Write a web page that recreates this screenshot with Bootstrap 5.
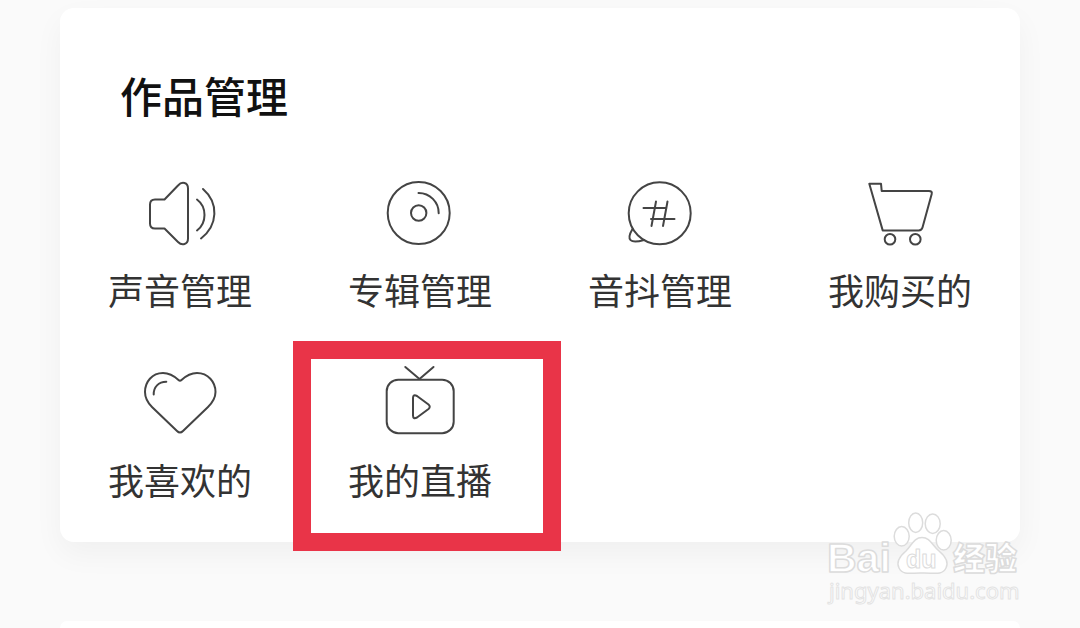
<!DOCTYPE html>
<html lang="zh-CN">
<head>
<meta charset="utf-8">
<meta name="viewport" content="width=device-width, initial-scale=1">
<title>作品管理</title>
<link href="https://cdn.jsdelivr.net/npm/bootstrap@5.3.0/dist/css/bootstrap.min.css" rel="stylesheet">
<style>
  body { background: #fafafa; font-family: "Noto Sans CJK SC", sans-serif; color: #333; }
  .page { padding: 8px 60px 0; gap: 79px; }
  .panel { background: #fff; border-radius: 14px; box-shadow: 0 12px 30px rgba(0, 0, 0, .045); }
  .works { padding: 57px 0 38px; }
  .next-panel { border-radius: 14px 14px 0 0; box-shadow: none; }
  .works-title { font-size: 42px; line-height: 60px; font-weight: 500; color: #111; margin: 0 60px 52px; }
  .tiles { row-gap: 53px; }
  .tile { gap: 15px; color: #333; font-size: 36px; line-height: 50px; font-weight: 400; }
  .tile svg { width: 72px; height: 72px; overflow: visible; fill: none; stroke: #444; stroke-width: 2; stroke-linecap: round; stroke-linejoin: round; }
  .marker { inset: -26px -21px -47px -7px; border: 18px solid #e93448; pointer-events: none; }
  .watermark { right: 52px; bottom: 16px; width: 208px; height: 100px; pointer-events: none; }
</style>
</head>
<body>
<main class="page container-fluid d-flex flex-column min-vh-100 position-relative overflow-hidden">
  <section class="panel works" aria-labelledby="works-title">
    <h1 class="works-title" id="works-title">作品管理</h1>
    <div class="tiles row row-cols-4 gx-0">
      <div class="col">
        <a href="#" class="tile d-flex flex-column align-items-center text-decoration-none text-nowrap">
          <svg viewBox="0 0 72 72" aria-hidden="true"><path d="M11 22.500H20.500L34 8.500C38 4 44 5.500 44 11.500V61.500C44 67.500 38 69 34 65L20.500 51.500H11Q6 51.500 6 46.500V27.500Q6 22.500 11 22.500ZM53 22.500C63 30 63 46 53 53.500M59 12C75 26 74 48 57 61.500"/></svg>
          <span>声音管理</span>
        </a>
      </div>
      <div class="col">
        <a href="#" class="tile d-flex flex-column align-items-center text-decoration-none text-nowrap">
          <svg viewBox="0 0 72 72" aria-hidden="true"><circle cx="34.700" cy="36" r="31"/><circle cx="34.700" cy="36" r="7.700"/><path d="M34.500 16A20 20 0 0 1 54.700 36.300"/></svg>
          <span>专辑管理</span>
        </a>
      </div>
      <div class="col">
        <a href="#" class="tile d-flex flex-column align-items-center text-decoration-none text-nowrap">
          <svg viewBox="0 0 72 72" aria-hidden="true"><circle cx="35.700" cy="36.300" r="31"/><path d="M8.500 52C2 63 6 67 20 63M19.500 31H42.500M27 42H50.500M32 24.500L27.500 49M43.500 24.500L39 49"/></svg>
          <span>音抖管理</span>
        </a>
      </div>
      <div class="col">
        <a href="#" class="tile d-flex flex-column align-items-center text-decoration-none text-nowrap">
          <svg viewBox="0 0 72 72" aria-hidden="true"><path d="M5.300 6.700H17L17.700 14H65Q68.500 14 67.700 17L58.500 50.500Q57.700 53.400 54.700 53.400H18.700Z"/><circle cx="26" cy="62.300" r="5.300"/><circle cx="51.300" cy="62.300" r="5.300"/></svg>
          <span>我购买的</span>
        </a>
      </div>
      <div class="col">
        <a href="#" class="tile d-flex flex-column align-items-center text-decoration-none text-nowrap">
          <svg viewBox="0 0 72 72" aria-hidden="true"><path d="M34.500 13C28 7 24 6 19 6C8 6 1 15 1 25C1 32 4 36 8 40L33 64Q36 67 39 64L64 40C68 36 71.500 32 71.500 25C71.500 15 64 6 53 6C48 6 44 7 37.500 13Q36 14.500 34.500 13ZM9.700 27.500C9.500 20 14.500 14.800 22.300 14.800"/></svg>
          <span>我喜欢的</span>
        </a>
      </div>
      <div class="col position-relative">
        <a href="#" class="tile d-flex flex-column align-items-center text-decoration-none text-nowrap">
          <svg viewBox="0 0 72 72" stroke-width="2.500" aria-hidden="true"><rect x="2.700" y="12.700" width="67" height="53.500" rx="11.500"/><path d="M21.300 0L35.500 12L49.500 0M29 31Q29 27 33 29L44.500 37.500Q47 39.700 44.500 42L33 50.500Q29 52.500 29 48.500Z"/></svg>
          <span>我的直播</span>
        </a>
        <div class="marker position-absolute"></div>
      </div>
    </div>
  </section>
  <section class="panel next-panel flex-grow-1"></section>

  <svg class="watermark position-absolute" viewBox="0 0 208 100" role="img" aria-label="Baidu 经验">
    <g fill="#fff" stroke="#dcdcdc" stroke-width="1.500" stroke-linejoin="round">
      <text x="7" y="60" font-family="Liberation Sans" font-weight="700" font-size="41">Bai</text>
      <ellipse cx="81.700" cy="24.300" rx="7.500" ry="9.700"/>
      <ellipse cx="95.700" cy="10.700" rx="7" ry="9.700"/>
      <ellipse cx="112.700" cy="11.700" rx="7.500" ry="9.700"/>
      <ellipse cx="123.700" cy="28.300" rx="7.500" ry="9.700"/>
      <path d="M102 25.500C94 25.500 92 33 86 39C80 44 76 50 79 56C83 64 92 60.500 102 61C113 60.500 122 64 126 56C129 50 125 44 119 39C112 33 110 25.500 102 25.500Z"/>
      <text x="86" y="56" font-family="Liberation Sans" font-weight="700" font-size="25" stroke-width="1">du</text>
      <text x="133" y="58" font-family="Noto Sans CJK SC" font-weight="900" font-size="32">经验</text>
      <text x="9" y="87" font-family="Noto Sans" font-size="22" stroke="#e3e3e3" stroke-width="1">jingyan.baidu.com</text>
    </g>
  </svg>
</main>
<script src="https://cdn.jsdelivr.net/npm/bootstrap@5.3.0/dist/js/bootstrap.bundle.min.js"></script>
</body>
</html>
